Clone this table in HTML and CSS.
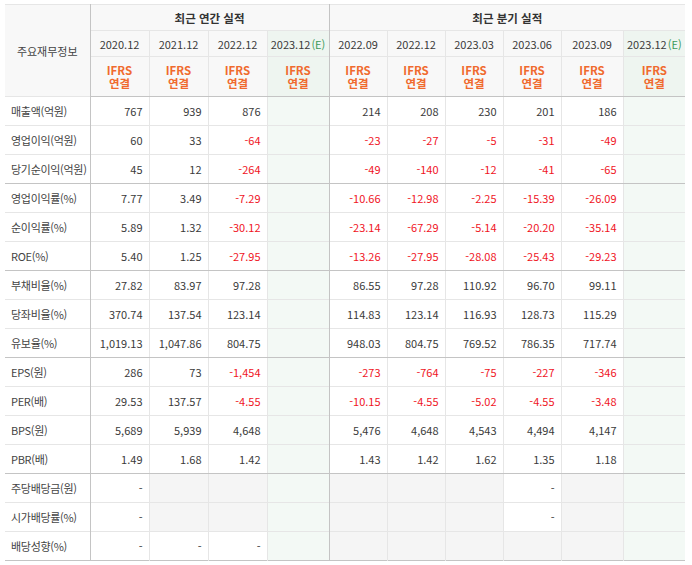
FILE: index.html
```html
<!DOCTYPE html>
<html lang="ko">
<head>
<meta charset="utf-8">
<link rel="stylesheet" href="styles.css">
</head>
<body>
<div class="wrap">
<table class="fin">
  <colgroup>
    <col class="c-label">
    <col class="c-a"><col class="c-a"><col class="c-a"><col class="c-a2">
    <col class="c-q"><col class="c-q"><col class="c-q"><col class="c-q"><col class="c-q2"><col class="c-q2">
  </colgroup>
  <thead>
    <tr class="h1">
      <th rowspan="3" class="label-head sep-r">주요재무정보</th>
      <th colspan="4" class="grp sep-r">최근 연간 실적</th>
      <th colspan="6" class="grp">최근 분기 실적</th>
    </tr>
    <tr class="h2">
      <th>2020.12</th><th>2021.12</th><th>2022.12</th><th class="est sep-r">2023.12<span class="e">(E)</span></th>
      <th>2022.09</th><th>2022.12</th><th>2023.03</th><th>2023.06</th><th>2023.09</th><th class="est">2023.12<span class="e">(E)</span></th>
    </tr>
    <tr class="h3">
      <th class="ifrs"><span>IFRS</span><span>연결</span></th><th class="ifrs"><span>IFRS</span><span>연결</span></th><th class="ifrs"><span>IFRS</span><span>연결</span></th><th class="ifrs est sep-r"><span>IFRS</span><span>연결</span></th>
      <th class="ifrs"><span>IFRS</span><span>연결</span></th><th class="ifrs"><span>IFRS</span><span>연결</span></th><th class="ifrs"><span>IFRS</span><span>연결</span></th><th class="ifrs"><span>IFRS</span><span>연결</span></th><th class="ifrs"><span>IFRS</span><span>연결</span></th><th class="ifrs est"><span>IFRS</span><span>연결</span></th>
    </tr>
  </thead>
  <tbody>
    <tr><th>매출액(억원)</th><td>767</td><td>939</td><td>876</td><td class="est sep-r"></td><td>214</td><td>208</td><td>230</td><td>201</td><td>186</td><td class="est"></td></tr>
    <tr><th>영업이익(억원)</th><td>60</td><td>33</td><td class="neg">-64</td><td class="est sep-r"></td><td class="neg">-23</td><td class="neg">-27</td><td class="neg">-5</td><td class="neg">-31</td><td class="neg">-49</td><td class="est"></td></tr>
    <tr class="gend"><th>당기순이익(억원)</th><td>45</td><td>12</td><td class="neg">-264</td><td class="est sep-r"></td><td class="neg">-49</td><td class="neg">-140</td><td class="neg">-12</td><td class="neg">-41</td><td class="neg">-65</td><td class="est"></td></tr>

    <tr><th>영업이익률(%)</th><td>7.77</td><td>3.49</td><td class="neg">-7.29</td><td class="est sep-r"></td><td class="neg">-10.66</td><td class="neg">-12.98</td><td class="neg">-2.25</td><td class="neg">-15.39</td><td class="neg">-26.09</td><td class="est"></td></tr>
    <tr><th>순이익률(%)</th><td>5.89</td><td>1.32</td><td class="neg">-30.12</td><td class="est sep-r"></td><td class="neg">-23.14</td><td class="neg">-67.29</td><td class="neg">-5.14</td><td class="neg">-20.20</td><td class="neg">-35.14</td><td class="est"></td></tr>
    <tr class="gend"><th>ROE(%)</th><td>5.40</td><td>1.25</td><td class="neg">-27.95</td><td class="est sep-r"></td><td class="neg">-13.26</td><td class="neg">-27.95</td><td class="neg">-28.08</td><td class="neg">-25.43</td><td class="neg">-29.23</td><td class="est"></td></tr>

    <tr><th>부채비율(%)</th><td>27.82</td><td>83.97</td><td>97.28</td><td class="est sep-r"></td><td>86.55</td><td>97.28</td><td>110.92</td><td>96.70</td><td>99.11</td><td class="est"></td></tr>
    <tr><th>당좌비율(%)</th><td>370.74</td><td>137.54</td><td>123.14</td><td class="est sep-r"></td><td>114.83</td><td>123.14</td><td>116.93</td><td>128.73</td><td>115.29</td><td class="est"></td></tr>
    <tr class="gend"><th>유보율(%)</th><td>1,019.13</td><td>1,047.86</td><td>804.75</td><td class="est sep-r"></td><td>948.03</td><td>804.75</td><td>769.52</td><td>786.35</td><td>717.74</td><td class="est"></td></tr>

    <tr><th>EPS(원)</th><td>286</td><td>73</td><td class="neg">-1,454</td><td class="est sep-r"></td><td class="neg">-273</td><td class="neg">-764</td><td class="neg">-75</td><td class="neg">-227</td><td class="neg">-346</td><td class="est"></td></tr>
    <tr><th>PER(배)</th><td>29.53</td><td>137.57</td><td class="neg">-4.55</td><td class="est sep-r"></td><td class="neg">-10.15</td><td class="neg">-4.55</td><td class="neg">-5.02</td><td class="neg">-4.55</td><td class="neg">-3.48</td><td class="est"></td></tr>
    <tr><th>BPS(원)</th><td>5,689</td><td>5,939</td><td>4,648</td><td class="est sep-r"></td><td>5,476</td><td>4,648</td><td>4,543</td><td>4,494</td><td>4,147</td><td class="est"></td></tr>
    <tr class="gend"><th>PBR(배)</th><td>1.49</td><td>1.68</td><td>1.42</td><td class="est sep-r"></td><td>1.43</td><td>1.42</td><td>1.62</td><td>1.35</td><td>1.18</td><td class="est"></td></tr>

    <tr><th>주당배당금(원)</th><td>-</td><td class="na"></td><td class="na"></td><td class="est sep-r"></td><td class="na"></td><td class="na"></td><td class="na"></td><td>-</td><td class="na"></td><td class="est"></td></tr>
    <tr><th>시가배당률(%)</th><td>-</td><td class="na"></td><td class="na"></td><td class="est sep-r"></td><td class="na"></td><td class="na"></td><td class="na"></td><td>-</td><td class="na"></td><td class="est"></td></tr>
    <tr class="last"><th>배당성향(%)</th><td>-</td><td>-</td><td>-</td><td class="est sep-r"></td><td class="na"></td><td class="na"></td><td class="na"></td><td class="na"></td><td class="na"></td><td class="est"></td></tr>
  </tbody>
</table>
</div>
</body>
</html>
```

FILE: styles.css
```css
html, body {
  margin: 0;
  padding: 0;
  background: #fff;
}

.wrap {
  padding: 4px 0 0 5px;
}

.fin {
  width: 680px;
  table-layout: fixed;
  border-collapse: collapse;
  font-family: "Noto Sans CJK KR", "Noto Sans", sans-serif;
  font-size: 11px;
  color: #3a3a3a;
  border-top: 1px solid #c4c4c4;
  border-bottom: 1px solid #c4c4c4;
}

.c-label { width: 85px; }
.c-a { width: 59px; }
.c-a2 { width: 62px; }
.c-q { width: 58px; }
.c-q2 { width: 62px; }

.fin th,
.fin td {
  padding: 0;
  border-top: 1px solid #e6e6e6;
  border-left: 1px solid #e6e6e6;
  border-right: 1px solid #e6e6e6;
  line-height: 14px;
  white-space: nowrap;
  overflow: hidden;
}

.fin tr > :first-child { border-left: none; }
.fin tr > :last-child { border-right: none; }

.fin thead th {
  background: #f8f8f8;
  font-weight: normal;
  text-align: center;
}

.fin .h1 th { height: 25px; }
.fin .h2 th { height: 25px; }
.fin .h3 th { height: 39px; }

.fin .h1 .grp {
  font-weight: bold;
  color: #333;
  font-size: 11.5px;
}

.fin .label-head {
  color: #444;
}

.fin thead .est {
  background: #eef5f0;
}

.e {
  color: #3c9a5a;
  margin-left: 1px;
}

.fin thead th.ifrs {
  color: #f06a2e;
  font-weight: bold;
}

.ifrs span {
  display: block;
  line-height: 13px;
  height: 13px;
  font-size: 11.5px;
}

.fin thead tr.h3 th {
  border-bottom: 1px solid #c4c4c4;
}

.fin tbody tr { height: 29px; }

.fin tbody th {
  background: #fff;
  font-weight: normal;
  text-align: left;
  padding-left: 6px;
  color: #444;
  letter-spacing: -0.3px;
  border-right: 1px solid #c4c4c4;
}

.fin tbody td {
  text-align: right;
  padding-right: 6px;
  background: #fff;
}

.fin tbody td.est {
  background: #f3f9f5;
}

.fin tbody td.na {
  background: #f5f5f5;
}

.fin .neg {
  color: #f0141e;
}

.fin tr.gend th,
.fin tr.gend td {
  border-bottom: 1px solid #c4c4c4;
}

.fin .sep-r {
  border-right: 1px solid #c4c4c4;
}
```
